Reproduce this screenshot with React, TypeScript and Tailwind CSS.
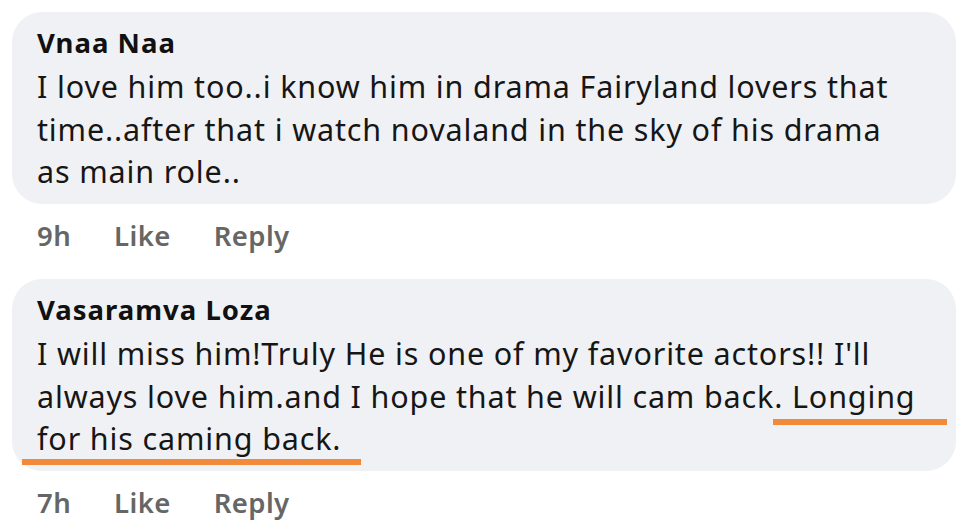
const comments = [
  {
    name: "Vnaa Naa",
    lines: [
      "I love him too..i know him in drama Fairyland lovers that",
      "time..after that i watch novaland in the sky of his drama",
      "as main role..",
    ],
    time: "9h",
    marks: false,
  },
  {
    name: "Vasaramva Loza",
    lines: [
      "I will miss him!Truly He is one of my favorite actors!! I'll",
      "always love him.and I hope that he will cam back. Longing",
      "for his caming back.",
    ],
    time: "7h",
    marks: true,
  },
];

export default function App() {
  return (
    <div
      className="flex h-[525px] w-[976px] flex-col bg-white px-3 pt-3 text-[#111]"
      style={{ fontFamily: '"Noto Sans", "Open Sans", sans-serif' }}
    >
      {comments.map((c, i) => (
        <div key={i} className={i === 0 ? "" : "mt-[23px]"}>
          <div className="relative h-[192px] w-[944px] rounded-[30px] bg-[#f0f1f4] pl-[25px] pt-[14px]">
            <p className="text-[27.5px] font-bold leading-[34px] tracking-[1px] text-[#111]">{c.name}</p>
            <p className="mt-[5px] text-[30.5px] leading-[42.5px] tracking-[0.85px] text-[#161616]">
              {c.lines.map((l, j) => (
                <span key={j}>
                  {l}
                  {j < c.lines.length - 1 && <br />}
                </span>
              ))}
            </p>
            {c.marks && (
              <>
                <div className="absolute left-[761px] top-[140px] h-[6px] w-[174px] bg-[#f28a3c]" />
                <div className="absolute left-[10px] top-[180px] h-[6px] w-[339px] bg-[#f28a3c]" />
              </>
            )}
          </div>
          <div className="flex gap-[43px] pl-[25px] pt-[12px] text-[27.5px] font-semibold leading-[40px] tracking-[0.4px] text-[#666]">
            <span>{c.time}</span>
            <span>Like</span>
            <span>Reply</span>
          </div>
        </div>
      ))}
    </div>
  );
}
